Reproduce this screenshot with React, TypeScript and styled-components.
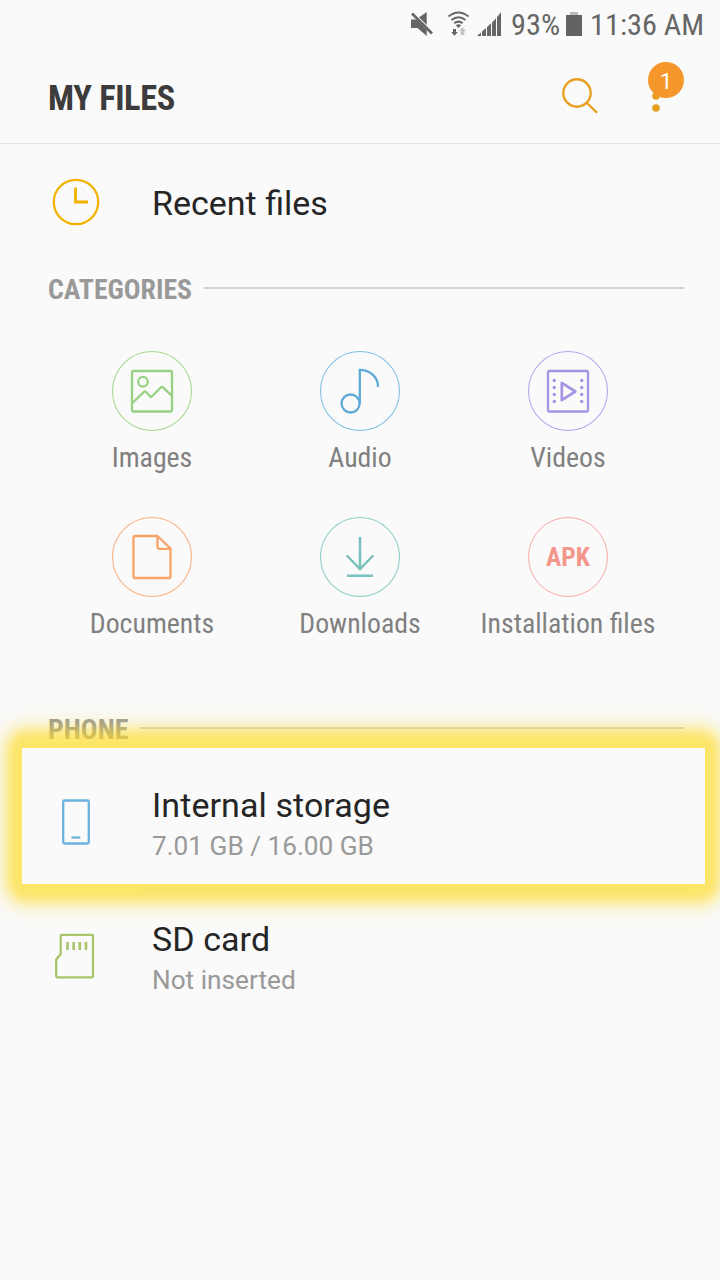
import React from "react";
import styled, { createGlobalStyle } from "styled-components";

const GlobalStyle = createGlobalStyle`
  * { box-sizing: border-box; }
  body { margin: 0; background: #fafafa; }
`;

const Screen = styled.main`
  width: 720px;
  height: 1280px;
  overflow: hidden;
  background: #fafafa;
  font-family: Roboto, sans-serif;
  display: flex;
  flex-direction: column;
`;

const condensed = `
  font-family: "Roboto Condensed", Roboto, sans-serif;
  font-stretch: 75%;
`;

const StatusBar = styled.div`
  height: 50px;
  padding-right: 16px;
  display: flex;
  justify-content: flex-end;
  align-items: center;
  color: #666;
`;

const StatusText = styled.span<{ $width: number }>`
  ${condensed}
  width: ${(p) => p.$width}px;
  font-size: 30.3px;
  line-height: 50px;
  white-space: nowrap;
`;

const StatusIcons = styled.svg`
  width: 104px;
  height: 50px;
  display: block;
`;

const BatteryIcon = styled.svg`
  width: 27px;
  height: 50px;
  display: block;
`;

const Header = styled.header`
  height: 94px;
  padding: 0 36px 0 48px;
  border-bottom: 1px solid #e5e5e5;
  display: flex;
  justify-content: space-between;
  align-items: center;
`;

const Title = styled.h1`
  ${condensed}
  margin: 0;
  padding-top: 3px;
  font-size: 34.4px;
  letter-spacing: -0.35px;
  line-height: 40px;
  font-weight: 700;
  color: #3c3c3c;
`;

const Actions = styled.div`
  display: flex;
  align-items: center;
  gap: 32px;
`;

const IconButton = styled.button`
  position: relative;
  width: 48px;
  height: 93px;
  padding: 0;
  border: 0;
  background: none;
  svg { display: block; }
`;

const Badge = styled.span`
  position: absolute;
  top: 12px;
  right: 0;
  width: 36px;
  height: 36px;
  border-radius: 50%;
  background: #f5972b;
  color: #fff;
  font: 400 22.5px/38px Roboto, sans-serif;
  text-align: center;
`;

const Row = styled.div<{ $height: number }>`
  height: ${(p) => p.$height}px;
  padding-left: 48px;
  display: flex;
  align-items: center;
`;

const RowIcon = styled.svg`
  width: 56px;
  height: 56px;
  margin-right: 48px;
  flex: none;
`;

const RowText = styled.div`
  display: flex;
  flex-direction: column;
`;

const RowTitle = styled.span<{ $single?: boolean }>`
  padding-top: ${(p) => (p.$single ? 2 : 0)}px;
  font-size: 34px;
  letter-spacing: ${(p) => (p.$single ? "normal" : "0.08px")};
  line-height: 42px;
  color: #252525;
`;

const RowDetail = styled.span`
  font-size: 26.2px;
  line-height: 32px;
  margin: 4px 0 -1px;
  color: #999;
`;

const SectionHead = styled.div`
  height: 56px;
  padding: 0 36px 0 48px;
  display: flex;
  align-items: center;
  gap: 12px;
  &::after {
    content: "";
    flex: 1;
    height: 2px;
    background: #d2d2d2;
  }
`;

const SectionTitle = styled.h2`
  ${condensed}
  margin: 0;
  padding-top: 3px;
  font-size: 27.8px;
  line-height: 34px;
  font-weight: 700;
  color: #999;
`;

const Categories = styled.div`
  padding: 35px 48px 0;
  height: 384px;
  display: grid;
  grid-template-columns: repeat(3, 208px);
  grid-auto-rows: 166px;
`;

const Category = styled.div`
  display: flex;
  flex-direction: column;
  align-items: center;
`;

const CategoryIcon = styled.svg`
  width: 80px;
  height: 80px;
  flex: none;
`;

const ApkCircle = styled.div`
  ${condensed}
  width: 80px;
  height: 80px;
  border: 1px solid #f7aba4;
  border-radius: 50%;
  color: #f3968c;
  font-size: 25.6px;
  line-height: 79px;
  font-weight: 700;
  text-align: center;
`;

const CategoryLabel = styled.span`
  ${condensed}
  margin-top: 10px;
  font-size: 27.8px;
  line-height: 34px;
  color: #808080;
  white-space: nowrap;
`;

const Highlight = styled.div`
  position: relative;
  isolation: isolate;
  height: 136px;
  margin: -8px 15px 0 22px;
  &::before {
    content: "";
    position: absolute;
    inset: -17px -14px;
    z-index: -1;
    border-radius: 18px;
    background: rgba(253, 219, 40, 0.7);
    box-shadow: 0 0 14px 7px rgba(253, 219, 40, 0.34);
    filter: blur(6px);
  }
  &::after {
    content: "";
    position: absolute;
    left: 119px;
    right: 21px;
    bottom: -6px;
    height: 1px;
    background: #f5df66;
  }
`;

const HighlightSurface = styled.div`
  height: 136px;
  padding: 12px 0 0 26px;
  background: #fafafa;
  display: flex;
  align-items: center;
`;

const SearchIcon = () => (
  <svg width="48" height="93" viewBox="556 50 48 93" fill="none" stroke="#e8a023" strokeWidth="2.4" strokeLinecap="round">
    <circle cx="577" cy="93" r="13.7" />
    <path d="M587 103 596.4 112.2" />
  </svg>
);

const MoreIcon = () => (
  <svg width="48" height="93" viewBox="636 50 48 93" fill="#e8a023">
    <circle cx="656" cy="84" r="3.8" />
    <circle cx="656" cy="96" r="3.8" />
    <circle cx="656" cy="108" r="3.8" />
  </svg>
);

const categories = [
  {
    label: "Images",
    color: "#97d182",
    ring: "#aadb9a",
    art: (
      <>
        <rect x="20" y="20" width="40" height="40.5" rx="1.5" />
        <circle cx="31" cy="30.7" r="4.8" />
        <path d="M20.5 52 32 40.8Q33 40 34 41L38 45.2Q39 46.2 40 45.2L49 36.3Q50 35.4 51 36.4L60 45" />
      </>
    ),
  },
  {
    label: "Audio",
    color: "#5fabd8",
    ring: "#8cc3e4",
    art: (
      <>
        <circle cx="30.6" cy="52.5" r="9" />
        <path d="M39.8 53V18.8C50 18.8 58 26 58 36" />
      </>
    ),
  },
  {
    label: "Videos",
    color: "#a594e4",
    ring: "#b9adec",
    art: (
      <>
        <rect x="20" y="20" width="40" height="40.5" rx="1.5" />
        <path d="M33.8 31.8V49.2L47.3 40.5Z" strokeLinejoin="round" strokeWidth="2.7" />
        {[29.5, 36.5, 43.5, 50.5].map((y) => (
          <g key={y} fill="#a594e4" stroke="none">
            <circle cx="26.3" cy={y} r="1.7" />
            <circle cx="53.7" cy={y} r="1.7" />
          </g>
        ))}
      </>
    ),
  },
  {
    label: "Documents",
    color: "#f8a368",
    ring: "#f9b68a",
    art: (
      <>
        <path d="M23 19H45.5L58.5 31.5V60Q58.5 61 57.5 61H22.5Q21.5 61 21.5 60V20.5Q21.5 19 23 19Z" strokeLinejoin="round" />
        <path d="M45.5 19.5V29.5Q45.5 31.8 47.5 31.8H58" />
      </>
    ),
  },
  {
    label: "Downloads",
    color: "#7ac1bd",
    ring: "#98d0cc",
    art: (
      <>
        <path d="M40 20V53M26.8 38.5 40 52 53.2 38.5M27 58.8H53" strokeWidth="2.5" />
      </>
    ),
  },
];

export default function App() {
  return (
    <>
      <GlobalStyle />
      <Screen>
        <StatusBar>
          <StatusIcons viewBox="407 0 104 50" fill="#666">
            <path d="M411 19.5H416L426.7 12V36L417.5 28H411Z" />
            <path d="M409.8 10.5 433.8 34.5" stroke="#fafafa" strokeWidth="3.2" />
            <path d="M412 13.5 432 33.5" stroke="#666" strokeWidth="2.6" />
            <g fill="none" stroke="#666" strokeWidth="2">
              <path d="M448.5 16.5Q458.5 8.5 468.5 16.5" />
              <path d="M451.5 20Q458.5 14.5 465.5 20" />
              <path d="M454.3 23.3Q458.5 20 462.7 23.3" />
            </g>
            <path d="M455.8 25.2Q458.5 23.2 461.2 25.2L458.5 28Z" />
            <path d="M453 29H456V32H457.8L454.5 35.8 451.2 32H453Z" />
            <path d="M460.7 35V31H459L462.5 27.2 466 31H464.3V35Z" fill="#c4c4c4" />
            <path d="M477 36 481 32.5V36ZM482 31.5 486 28V36H482ZM487 27 491 23.3V36H487ZM492 22.5 496 18.3V36H492ZM497 17.3 501 12V36H497Z" />
          </StatusIcons>
          <StatusText $width={52}>93%</StatusText>
          <BatteryIcon viewBox="563 0 27 50">
            <path d="M570 12H578V15H582V20H566V15H570Z" fill="#bdbdbd" />
            <path d="M566 15H582V36H566Z" fill="#636363" />
          </BatteryIcon>
          <StatusText $width={114}>11:36 AM</StatusText>
        </StatusBar>

        <Header>
          <Title>MY FILES</Title>
          <Actions>
            <IconButton aria-label="Search">
              <SearchIcon />
            </IconButton>
            <IconButton aria-label="More options">
              <MoreIcon />
              <Badge>1</Badge>
            </IconButton>
          </Actions>
        </Header>

        <Row $height={116}>
          <RowIcon viewBox="48 174 56 56" fill="none" stroke="#f2b200">
            <circle cx="76" cy="202" r="22.2" strokeWidth="2.3" />
            <path d="M75.5 187.5V202H88" strokeWidth="2.8" />
          </RowIcon>
          <RowTitle $single>Recent files</RowTitle>
        </Row>

        <SectionHead>
          <SectionTitle>CATEGORIES</SectionTitle>
        </SectionHead>

        <Categories>
          {categories.map((c) => (
            <Category key={c.label}>
              <CategoryIcon viewBox="0 0 80 80" fill="none" stroke={c.color} strokeWidth="2.3">
                <circle cx="40" cy="40" r="39.5" stroke={c.ring} strokeWidth="1.1" />
                {c.art}
              </CategoryIcon>
              <CategoryLabel>{c.label}</CategoryLabel>
            </Category>
          ))}
          <Category>
            <ApkCircle>APK</ApkCircle>
            <CategoryLabel>Installation files</CategoryLabel>
          </Category>
        </Categories>

        <SectionHead>
          <SectionTitle>PHONE</SectionTitle>
        </SectionHead>

        <Highlight>
          <HighlightSurface>
            <RowIcon viewBox="48 794 56 56" fill="none" stroke="#6db2de" strokeWidth="2.3">
              <rect x="63.2" y="800.5" width="25.6" height="43" rx="1.3" />
              <path d="M71.5 837.5H80.3" />
            </RowIcon>
            <RowText>
              <RowTitle>Internal storage</RowTitle>
              <RowDetail>7.01 GB / 16.00 GB</RowDetail>
            </RowText>
          </HighlightSurface>
        </Highlight>

        <Row $height={144}>
          <RowIcon viewBox="48 928 56 56" fill="none" stroke="#a8c56b" strokeWidth="2.3">
            <path d="M60.7 935.8Q60.7 934.8 61.7 934.8H92Q93 934.8 93 935.8V976.3Q93 977.3 92 977.3H57.2Q56.2 977.3 56.2 976.3V959.5L60.7 954Z" strokeLinejoin="round" />
            <path d="M67.5 942V950M73.7 942V950M79.8 942V950M86 942V950" strokeWidth="2.6" />
          </RowIcon>
          <RowText>
            <RowTitle>SD card</RowTitle>
            <RowDetail>Not inserted</RowDetail>
          </RowText>
        </Row>
      </Screen>
    </>
  );
}
